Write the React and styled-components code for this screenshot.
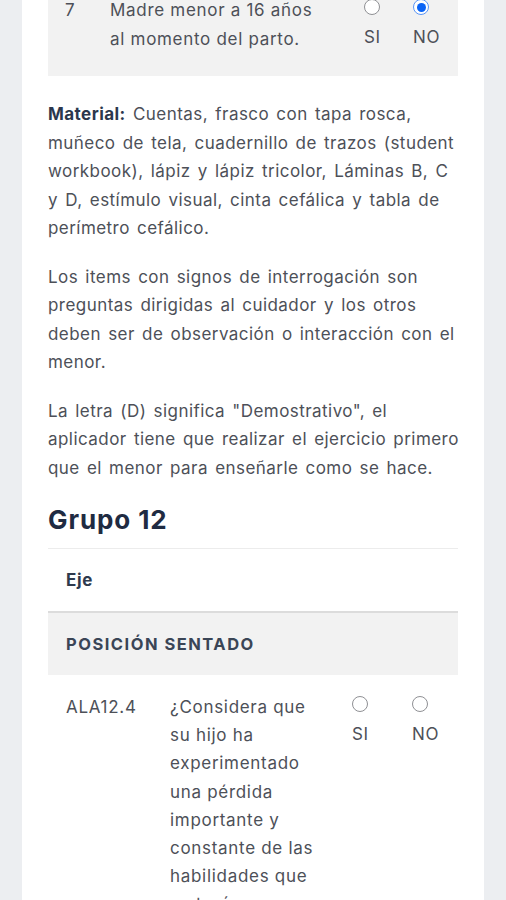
import React from 'react';
import styled, { createGlobalStyle } from 'styled-components';

const GlobalStyle = createGlobalStyle`
  html, body {
    margin: 0;
    padding: 0;
    background: #eceef1;
  }
  body {
    font-family: Inter, "Noto Sans", "Liberation Sans", sans-serif;
    -webkit-font-smoothing: antialiased;
  }
`;

const firstRow = {
  num: '7',
  text: 'Madre menor a 16 años al momento del parto.',
  answer: 'NO',
};

const questions = [
  {
    code: 'ALA12.4',
    text: '¿Considera que su hijo ha experimentado una pérdida importante y constante de las habilidades que ya tenía adquiridas?',
    answer: null,
  },
];

function App() {
  return (
    <>
      <GlobalStyle />
      <Page>
        <Card>
          <AnswerTable>
            <TopRow>
              <NumCell>{firstRow.num}</NumCell>
              <TopText>{firstRow.text}</TopText>
              <Option checked={firstRow.answer === 'SI'} label="SI" />
              <Option checked={firstRow.answer === 'NO'} label="NO" />
            </TopRow>
          </AnswerTable>

          <Paragraph>
            <Strong>Material:</Strong> Cuentas, frasco con tapa rosca, muñeco de tela,
            cuadernillo de trazos (student workbook), lápiz y lápiz tricolor, Láminas B, C y
            D, estímulo visual, cinta cefálica y tabla de perímetro cefálico.
          </Paragraph>
          <Paragraph>
            Los items con signos de interrogación son preguntas dirigidas al cuidador y los
            otros deben ser de observación o interacción con el menor.
          </Paragraph>
          <Paragraph>
            La letra (D) significa "Demostrativo", el aplicador tiene que realizar el
            ejercicio primero que el menor para enseñarle como se hace.
          </Paragraph>

          <GroupTitle>Grupo 12</GroupTitle>
          <GroupTable>
            <HeadRow>Eje</HeadRow>
            <SectionRow>POSICIÓN SENTADO</SectionRow>
            {questions.map((q) => (
              <QuestionRow key={q.code}>
                <CodeCell>{q.code}</CodeCell>
                <QuestionText>{q.text}</QuestionText>
                <Option checked={q.answer === 'SI'} label="SI" />
                <Option checked={q.answer === 'NO'} label="NO" />
              </QuestionRow>
            ))}
          </GroupTable>
        </Card>
      </Page>
    </>
  );
}

const Option = ({ checked, label }) => (
  <OptionCell>
    <Radio checked={checked} />
    <OptionLabel>{label}</OptionLabel>
  </OptionCell>
);

export default App;

const Page = styled.div`
  height: 900px;
  overflow: hidden;
  padding: 0 22px;
`;

const Card = styled.div`
  background: #ffffff;
  margin-top: -16px;
  padding: 0 26px 40px;
  min-height: 1000px;
  letter-spacing: 0.7px;
`;

const AnswerTable = styled.div`
  background: #f2f2f2;
`;

const TopRow = styled.div`
  display: grid;
  grid-template-columns: 45px 254px 49px 1fr;
  padding: 12px 0 23px 17px;
  font-size: 17px;
  line-height: 28.5px;
  color: #4d5058;
`;

const NumCell = styled.div``;

const TopText = styled.div`
  padding-right: 40px;
`;

const OptionCell = styled.div`
  display: flex;
  flex-direction: column;
  align-items: flex-start;
  padding-top: 3px;
  gap: 8px;
`;

const Radio = styled.span`
  box-sizing: border-box;
  width: 16px;
  height: 16px;
  border-radius: 50%;
  background: #fff;
  border: ${(p) => (p.checked ? '1.5px solid #5a95f5' : '1px solid #8f9094')};
  display: flex;
  align-items: center;
  justify-content: center;
  &::after {
    content: '';
    display: ${(p) => (p.checked ? 'block' : 'none')};
    width: 9px;
    height: 9px;
    border-radius: 50%;
    background: #0a63f5;
  }
`;

const OptionLabel = styled.span`
  font-size: 17px;
  line-height: 28px;
  color: #4d5058;
`;

const Paragraph = styled.p`
  margin: 24px -3px 0 0;
  font-size: 17px;
  line-height: 28.5px;
  letter-spacing: 0.45px;
  word-spacing: 2px;
  color: #4d5058;
  & + & {
    margin-top: 20px;
  }
`;

const Strong = styled.strong`
  font-weight: 700;
  color: #2b374d;
`;

const GroupTitle = styled.h2`
  margin: 22px 0 12px;
  font-size: 26px;
  line-height: 32px;
  font-weight: 700;
  color: #1f2b42;
  letter-spacing: 0.9px;
`;

const GroupTable = styled.div`
  border-top: 1px solid #ececec;
`;

const HeadRow = styled.div`
  padding: 17px 18px;
  font-size: 17px;
  line-height: 28px;
  font-weight: 700;
  color: #2e3a4d;
  border-bottom: 2px solid #dcdcdc;
`;

const SectionRow = styled.div`
  background: #f2f2f2;
  padding: 17px 18px;
  font-size: 16.5px;
  line-height: 28px;
  font-weight: 700;
  letter-spacing: 1.5px;
  color: #3a4556;
`;

const QuestionRow = styled.div`
  display: grid;
  grid-template-columns: 104px 182px 60px 1fr;
  padding: 18px 0 18px 18px;
  font-size: 17px;
  line-height: 28.2px;
  color: #4d5058;
`;

const CodeCell = styled.div``;

const QuestionText = styled.div`
  padding-right: 30px;
`;
